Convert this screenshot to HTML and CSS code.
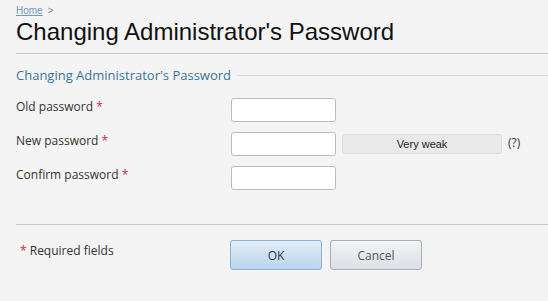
FILE: index.html
```html
<!DOCTYPE html>
<html>
<head lang="en">
    <meta charset="UTF-8">
    <title>Changing Administrator's Password</title>
    <link rel="stylesheet" href="styles.css">
</head>
<body>
    <div class="page-header">
        <div class="breadcrumb"><a href="javascript:;">Home</a> <span class="sep">&gt;</span></div>
        <h1>Changing Administrator's Password</h1>
    </div>

    <div class="form-box">
        <div class="legend"><span>Changing Administrator's Password</span></div>

        <div class="form-row">
            <label>Old password <em>*</em></label>
            <input type="password" class="field">
        </div>
        <div class="form-row">
            <label>New password <em>*</em></label>
            <input type="password" class="field">
            <div class="strength">Very weak</div>
            <span class="hint">(?)</span>
        </div>
        <div class="form-row">
            <label>Confirm password <em>*</em></label>
            <input type="password" class="field">
        </div>
    </div>

    <div class="form-footer">
        <div class="required"><em>*</em> Required fields</div>
        <div class="buttons">
            <button class="btn btn-ok">OK</button>
            <button class="btn btn-cancel">Cancel</button>
        </div>
    </div>
</body>
</html>
```

FILE: styles.css
```css
body {
    margin: 0;
    padding: 0 0 0 16px;
    background: #f4f4f4;
    font-family: "Open Sans", "DejaVu Sans", sans-serif;
    font-size: 12px;
    color: #333;
}

.page-header {
    border-bottom: 1px solid #c8c8c8;
    height: 53px;
}

.breadcrumb {
    font-family: "Liberation Sans", Arial, sans-serif;
    font-size: 10px;
    padding-top: 5px;
    line-height: 12px;
}

.breadcrumb a {
    color: #6b9cc4;
}

.breadcrumb .sep {
    color: #888;
    margin-left: 2px;
}

h1 {
    margin: 0;
    font-family: "Liberation Sans", Arial, sans-serif;
    font-weight: normal;
    font-size: 24px;
    line-height: 30px;
    color: #111;
}

.form-box {
    padding-top: 13px;
}

.legend {
    display: flex;
    align-items: center;
    font-size: 13px;
    color: #3a7598;
    height: 16px;
    margin-bottom: 15px;
}

.legend::after {
    content: "";
    flex: 1;
    border-top: 1px solid #dcdcdc;
    margin-left: 6px;
}

.form-row {
    display: flex;
    align-items: flex-start;
    height: 34px;
}

.form-row label {
    width: 215px;
    padding-top: 1px;
    line-height: 16px;
    color: #333;
}

em {
    font-style: normal;
    color: #c2285a;
}

.field {
    box-sizing: border-box;
    width: 105px;
    height: 24px;
    margin: 0;
    border: 1px solid #bcbcbc;
    border-radius: 3px;
    background: #fff;
}

.strength {
    box-sizing: border-box;
    width: 160px;
    height: 20px;
    margin: 2px 0 0 6px;
    border: 1px solid #dedede;
    border-radius: 3px;
    background: #e9e9e9;
    text-align: center;
    font-family: "Liberation Sans", Arial, sans-serif;
    font-size: 11px;
    line-height: 18px;
    color: #222;
}

.hint {
    margin: 3px 0 0 6px;
    font-size: 12px;
    line-height: 16px;
}

.form-footer {
    margin-top: 24px;
    border-top: 1px solid #c8c8c8;
    display: flex;
    padding-top: 15px;
}

.required {
    width: 210px;
    padding: 3px 0 0 4px;
    line-height: 16px;
    color: #333;
}

.buttons {
    display: flex;
    gap: 8px;
}

.btn {
    width: 92px;
    height: 30px;
    border-radius: 3px;
    font-family: "Open Sans", "DejaVu Sans", sans-serif;
    font-size: 12px;
    color: #444;
    padding: 0;
}

.btn-ok {
    border: 1px solid #8db2d6;
    background: linear-gradient(#e1edf8, #b9d5ee);
    color: #334;
}

.btn-cancel {
    border: 1px solid #a7b0b8;
    background: linear-gradient(#f2f4f6, #dbe0e5);
    color: #555;
}
```
